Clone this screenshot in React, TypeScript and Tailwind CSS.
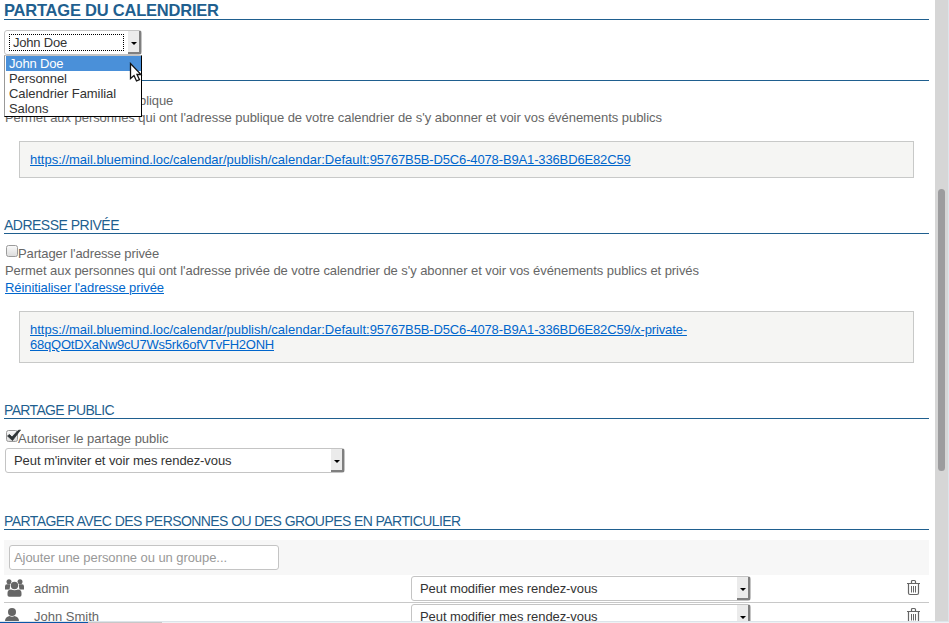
import type { ReactNode } from "react";

const URL_BASE = "https://mail.bluemind.loc/calendar/publish/calendar:Default:";
const URL_ID = "95767B5B-D5C6-4078-B9A1-336BD6E82C59";

function Heading({ children, className = "" }: { children?: ReactNode; className?: string }) {
  return (
    <h2 className={`ml-1 h-[17px] w-[925px] border-b border-[#1f5f8f] text-[14px] leading-[17px] text-[#1f5f8f] ${className}`}>
      {children}
    </h2>
  );
}

function SelectButton() {
  return (
    <span className="flex h-[23px] w-[13px] shrink-0 items-center justify-center border-r-2 border-b-2 border-[#7f7f7f] bg-[#ebebeb]">
      <svg width="6" height="3" viewBox="0 0 6 3" className="mt-[3px] ml-px shrink-0">
        <path d="M0 0h6L3 3z" fill="#000" />
      </svg>
    </span>
  );
}

function Select({ label, className = "" }: { label: string; className?: string }) {
  return (
    <div className={`flex h-[25px] w-[340px] items-center justify-between rounded-[3px] border border-[#c4c4c4] bg-white pl-2 text-[#333] ${className}`}>
      <span className="tracking-[-0.085px]">{label}</span>
      <SelectButton />
    </div>
  );
}

function Checkbox({ checked = false }: { checked?: boolean }) {
  return (
    <svg width="16" height="15" viewBox="0 0 16 15" className="-mt-px -mr-[3px] shrink-0">
      <defs>
        <linearGradient id="box" x1="0" y1="0" x2="0" y2="1">
          <stop offset="0" stopColor="#fafafa" />
          <stop offset="1" stopColor="#dcdcdc" />
        </linearGradient>
      </defs>
      <rect x="1.5" y="1.5" width="11" height="11" rx="2" fill="url(#box)" stroke="#9b9b9b" />
      {checked && <path d="M2.500 7l2-1.500L7 8 13 1.500 15.500 1 7.500 11.500z" fill="#2e3436" stroke="#2e3436" strokeWidth=".8" />}
    </svg>
  );
}

function LinkBox({ children, className = "" }: { children: ReactNode; className?: string }) {
  return (
    <div className={`ml-[19px] w-[895px] border border-[#c8c9c8] bg-[#f5f5f3] px-2.5 pt-2.5 leading-[15px] ${className}`}>
      <a href="#" className="text-[#0066cc] underline underline-offset-1">{children}</a>
    </div>
  );
}

function GroupIcon() {
  return (
    <svg width="19" height="18" viewBox="0 0 19 18" fill="#666" className="shrink-0">
      <circle cx="4" cy="2.7" r="2.500" />
      <circle cx="15" cy="2.7" r="2.500" />
      <path d="M0 10.500V7.500Q0 5.300 2 5.300h3.500L4.500 10.500z M19 10.500V7.500Q19 5.300 17 5.300h-3.500L14.500 10.500z" />
      <circle cx="9.500" cy="6.500" r="4.300" fill="#fff" />
      <circle cx="9.500" cy="6.500" r="3.700" />
      <path d="M2.500 16v-2q0-3.500 3.500-3.500 3.500 1.500 7 0 3.500 0 3.500 3.500v2q0 1.700-1.700 1.700H4.200Q2.500 17.700 2.500 16z" />
    </svg>
  );
}

function PersonIcon() {
  return (
    <svg width="19" height="18" viewBox="0 0 19 18" fill="#666" className="shrink-0">
      <circle cx="7" cy="5" r="4" />
      <path d="M0 14q0-4 4.500-5 2.500 1.500 5 0 4.500 1 4.500 5v2H0z" />
    </svg>
  );
}

function TrashIcon() {
  return (
    <svg width="14" height="17" viewBox="0 0 14 17" fill="none" stroke="#666" className="shrink-0">
      <path d="M0 4.500h13 M4.500 4V2.500q0-1 1-1h2q1 0 1 1V4 M1.500 5v9q0 1.500 1.500 1.500h7q1.500 0 1.500-1.500V5" strokeWidth="1.200" />
      <path d="M4.500 7v6.500 M6.500 7v6.500 M8.500 7v6.500" />
    </svg>
  );
}

function ShareRow({ icon, name, nameClass }: { icon: ReactNode; name: string; nameClass: string }) {
  return (
    <div className="ml-1 flex h-7 w-[925px] shrink-0 items-center border-b border-[#c8c8c8]">
      <div className="-mt-px flex w-[30px] pl-px">{icon}</div>
      <span className={`w-[377px] ${nameClass}`}>{name}</span>
      <Select label="Peut modifier mes rendez-vous" />
      <div className="-mt-[3px] ml-[156px]"><TrashIcon /></div>
    </div>
  );
}

const calendars = ["John Doe", "Personnel", "Calendrier Familial", "Salons"];

export default function App() {
  return (
    <div className="relative flex h-[623px] w-[949px] flex-col overflow-hidden bg-white font-['Liberation_Sans',Arial,sans-serif] text-[13px] leading-[17px] whitespace-nowrap text-[#666]">
      <div className="flex h-[621px] min-h-0">
        <main className="flex w-[935px] flex-col overflow-hidden">
          <h1 className="ml-1 h-5 w-[925px] shrink-0 border-b border-[#1f5f8f] text-[16.5px] leading-[20px] font-bold tracking-[-0.22px] text-[#1f5f8f]">
            PARTAGE DU CALENDRIER
          </h1>
          <div className="relative mt-2.5 ml-1 flex h-[25px] w-[138px] shrink-0 items-center justify-between rounded-[3px] border border-[#c4c4c4] bg-white pl-1 text-[#333]">
            <span className="h-[17px] w-[115px] border border-dotted border-black pl-[3px] leading-[16px] tracking-[-0.2px]">John Doe</span>
            <SelectButton />
            <ul className="absolute top-[24px] -left-px z-10 w-[138px] border border-t-[#c4c4c4] border-r-black border-b-black border-l-[#999] bg-white tracking-[-0.07px]">
              {calendars.map((c, i) => (
                <li key={c} className={i === 0 ? "ml-px h-[15px] bg-[#4a90d9] pl-[3px] leading-[16px] tracking-[-0.15px] text-white" : "h-[15px] pl-1 leading-[16px]"}>
                  {c}
                </li>
              ))}
            </ul>
            <svg width="14" height="21" viewBox="0 0 14 21" className="absolute top-[31px] left-[124px] z-20">
              <path d="M1.500 1.500v15l3.500-3 2.500 5.500 3-1.400-2.500-5.100h4z" fill="#fff" stroke="#111" strokeWidth="1.300" />
            </svg>
          </div>
          <Heading className="mt-[9px] shrink-0" />
          <div className="mt-[11px] ml-[5px] flex h-[17px] shrink-0"><Checkbox /><span className="tracking-[-0.1px]">Partager l'adresse publique</span></div>
          <p className="ml-[5px] shrink-0 tracking-[-0.05px]">
            Permet aux personnes qui ont l'adresse publique de votre calendrier de s'y abonner et voir vos événements publics
          </p>
          <LinkBox className="mt-[15px] h-[37px] shrink-0">
            <span>{URL_BASE}</span><span className="tracking-[-0.138px]">{URL_ID}</span>
          </LinkBox>

          <Heading className="mt-[39px] shrink-0 tracking-[-0.51px]">ADRESSE PRIVÉE</Heading>
          <div className="mt-[11px] ml-[5px] flex h-[17px] shrink-0"><Checkbox /><span className="tracking-[-0.125px]">Partager l'adresse privée</span></div>
          <p className="ml-[5px] shrink-0 tracking-[-0.063px]">
            Permet aux personnes qui ont l'adresse privée de votre calendrier de s'y abonner et voir vos événements publics et privés
          </p>
          <a href="#" className="ml-[5px] w-fit shrink-0 tracking-[-0.082px] text-[#0066cc] underline underline-offset-1">Réinitialiser l'adresse privée</a>
          <LinkBox className="mt-[15px] h-[52px] shrink-0">
            <span>{URL_BASE}</span><span className="tracking-[-0.138px]">{URL_ID}/x-private-</span><br />
            <span className="tracking-[-0.231px]">68qQOtDXaNw9cU7Ws5rk6ofVTvFH2ONH</span>
          </LinkBox>

          <Heading className="mt-[39px] shrink-0 tracking-[-0.65px]">PARTAGE PUBLIC</Heading>
          <div className="mt-[11px] ml-[5px] flex h-[17px] shrink-0"><Checkbox checked /><span className="tracking-[-0.02px]">Autoriser le partage public</span></div>
          <Select label="Peut m'inviter et voir mes rendez-vous" className="mt-px ml-[5px] shrink-0" />

          <Heading className="mt-10 shrink-0 tracking-[-0.575px]">PARTAGER AVEC DES PERSONNES OU DES GROUPES EN PARTICULIER</Heading>
          <div className="mt-2.5 ml-1 h-[35px] w-[925px] shrink-0 bg-[#f7f7f7] p-[5px]">
            <div className="h-[25px] w-[270px] rounded-[3px] border border-[#c4c4c4] bg-white pl-1 leading-[24px] tracking-[-0.067px] text-[#999]">
              Ajouter une personne ou un groupe...
            </div>
          </div>
          <ShareRow icon={<GroupIcon />} name="admin" nameClass="tracking-[-0.08px]" />
          <ShareRow icon={<PersonIcon />} name="John Smith" nameClass="" />
        </main>
        <aside className="w-[13px] bg-[#d6d6d6] pt-[189px] pl-[3px]">
          <div className="h-[282px] w-[7px] rounded-full bg-[#9c9c9e]" />
        </aside>
        <div className="w-px bg-[#dce4ea]" />
      </div>
      <div className="h-px bg-[#dce4ea]" />
      <div className="flex h-px bg-[#eef2f4]">
        <div className="w-[88px] bg-[#0a56a8]" />
        <div className="w-[74px] bg-[#c8c8c8]" />
      </div>
    </div>
  );
}
